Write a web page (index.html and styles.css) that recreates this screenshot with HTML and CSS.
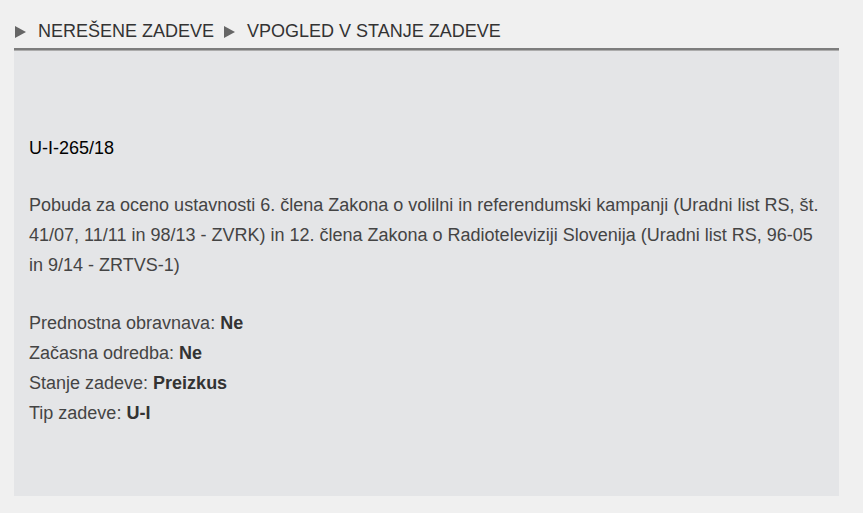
FILE: index.html
```html
<!DOCTYPE html>
<html lang="sl">
<head>
    <meta charset="UTF-8">
    <meta name="viewport" content="width=device-width, initial-scale=1.0">
    <title>Vpogled v stanje zadeve</title>
    <link rel="stylesheet" href="styles.css">
</head>
<body>

    <div class="page">
        <ul class="breadcrumb">
            <li><a href="#">NEREŠENE ZADEVE</a></li>
            <li><a href="#">VPOGLED V STANJE ZADEVE</a></li>
        </ul>

        <div class="case-panel">
            <p class="case-number">U-I-265/18</p>
            <p class="case-title">Pobuda za oceno ustavnosti 6. člena Zakona o volilni in referendumski kampanji (Uradni list RS, št. 41/07, 11/11 in 98/13 - ZVRK) in 12. člena Zakona o Radioteleviziji Slovenija (Uradni list RS, 96-05 in 9/14 - ZRTVS-1)</p>
            <ul class="case-details">
                <li>Prednostna obravnava: <strong>Ne</strong></li>
                <li>Začasna odredba: <strong>Ne</strong></li>
                <li>Stanje zadeve: <strong>Preizkus</strong></li>
                <li>Tip zadeve: <strong>U-I</strong></li>
            </ul>
        </div>
    </div>

</body>
</html>
```

FILE: styles.css
```css
body {
    font-family: "Liberation Sans", Arial, sans-serif;
    margin: 0;
    padding: 0;
    background-color: #f0f0f0;
    color: #444;
}
.page {
    padding: 0 24px 17px 14px;
}
.breadcrumb {
    list-style-type: none;
    margin: 0;
    padding: 21px 0 6px 1px;
    display: flex;
    gap: 10px;
    font-size: 18px;
    line-height: 21px;
}
.breadcrumb li {
    display: flex;
    align-items: center;
    gap: 12px;
}
.breadcrumb li::before {
    content: "";
    width: 0;
    height: 0;
    border-top: 6px solid transparent;
    border-bottom: 6px solid transparent;
    border-left: 11px solid #666;
}
.breadcrumb li a {
    color: #333;
    text-decoration: none;
}
.case-panel {
    background-color: #e4e5e7;
    border-top: 2px solid #7d7d7d;
    box-shadow: inset 0 1px 0 #acacac;
    padding: 83px 16px 68px 15px;
    font-size: 18px;
    line-height: 30px;
}
.case-panel p {
    margin: 0 0 27px 0;
}
.case-panel .case-title {
    margin-bottom: 28px;
}
.case-number {
    color: #000;
}
.case-details {
    list-style-type: none;
    margin: 0;
    padding: 0;
}
.case-details strong {
    color: #333;
}
```
